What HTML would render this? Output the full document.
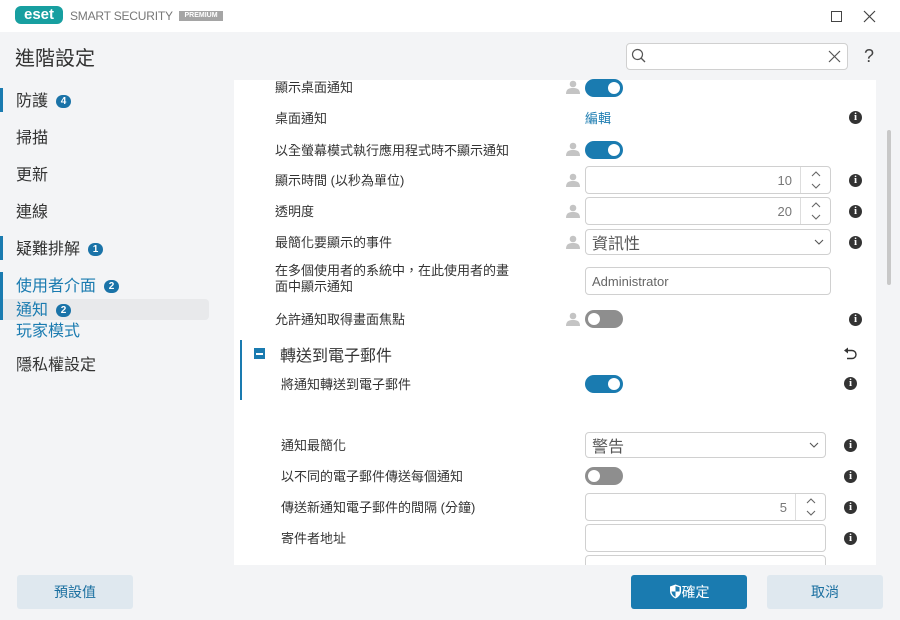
<!DOCTYPE html>
<html><head><meta charset="utf-8"><style>
*{margin:0;padding:0;box-sizing:border-box}
body{width:900px;height:620px;overflow:hidden;background:#f3f4f6;font-family:"Liberation Sans","Noto Sans CJK TC",sans-serif;color:#333;position:relative}
.a{position:absolute}
.top{left:0;top:0;width:900px;height:32px;background:#fff}
.side{font-size:16px;color:#333;left:16px}
.bar{left:0;width:3px;background:#1a7bb0}
.badge{display:inline-block;background:#1a73a8;color:#fff;font-size:10px;font-weight:bold;border-radius:7px;width:15px;height:13px;line-height:13px;text-align:center;vertical-align:2px;margin-left:8px}
.lbl{font-size:13px;color:#333}
.tog{width:38px;height:18px;border-radius:9px;background:#1a7bb0}
.tog::after{content:"";position:absolute;right:3px;top:3px;width:12px;height:12px;border-radius:50%;background:#fff}
.tog.off{background:#8e8e8e}
.tog.off::after{left:3px;right:auto}
.inp{background:#fff;border:1px solid #d0d0d0;border-radius:4px;font-size:13px;color:#666}
.info{width:13px;height:13px;border-radius:50%;background:#333;color:#fff;font-size:11px;font-weight:bold;text-align:center;line-height:13px;font-family:"Liberation Serif",serif}
.usr{width:14px;height:14px}
.btn{height:34px;border-radius:3px;font-size:14px;text-align:center;line-height:34px}
</style></head><body>
<div class="a top"></div>
<div class="a" style="left:15px;top:6px;width:48px;height:18px;border-radius:6px;background:#179fa0;color:#fff;font-weight:bold;font-size:15px;line-height:18px;text-align:center">eset</div>
<div class="a" style="left:70px;top:9px;font-size:12px;color:#777;letter-spacing:-0.2px">SMART SECURITY</div>
<div class="a" style="left:179px;top:11px;width:44px;height:10px;background:#a5a5a5;color:#fff;font-size:7px;font-weight:bold;line-height:10px;text-align:center">PREMIUM</div>
<div class="a" style="left:831px;top:11px;width:11px;height:11px;border:1px solid #444"></div>
<svg class="a" style="left:863px;top:10px" width="13" height="13"><path d="M1 1L12 12M12 1L1 12" stroke="#444" stroke-width="1.2"/></svg>

<div class="a" style="left:15px;top:42px;font-size:20px;color:#333">進階設定</div>
<div class="a inp" style="left:626px;top:43px;width:222px;height:27px"></div>
<svg class="a" style="left:631px;top:48px" width="16" height="16"><circle cx="6.5" cy="6.5" r="5" fill="none" stroke="#555" stroke-width="1.2"/><path d="M10 10L14 14" stroke="#555" stroke-width="1.3"/></svg>
<svg class="a" style="left:828px;top:50px" width="13" height="13"><path d="M1 1L12 12M12 1L1 12" stroke="#555" stroke-width="1.2"/></svg>
<div class="a" style="left:864px;top:46px;font-size:18px;color:#444">?</div>

<div class="a bar" style="top:88px;height:24px"></div>
<div class="a side" style="top:87px">防護<span class="badge">4</span></div>
<div class="a side" style="top:124px">掃描</div>
<div class="a side" style="top:161px">更新</div>
<div class="a side" style="top:198px">連線</div>
<div class="a bar" style="top:236px;height:24px"></div>
<div class="a side" style="top:235px">疑難排解<span class="badge">1</span></div>
<div class="a bar" style="top:272px;height:48px"></div>
<div class="a" style="left:3px;top:299px;width:206px;height:21px;background:#e8e9eb;border-radius:0 4px 4px 0"></div>
<div class="a side" style="top:272px;color:#1a7bb0">使用者介面<span class="badge">2</span></div>
<div class="a side" style="top:296px;color:#1a7bb0">通知<span class="badge">2</span></div>
<div class="a side" style="top:317px;color:#1a7bb0">玩家模式</div>
<div class="a side" style="top:351px">隱私權設定</div>

<div class="a" style="left:234px;top:80px;width:642px;height:485px;background:#fff"></div>
<div class="a" style="left:887px;top:130px;width:4px;height:155px;background:#c8c8c8;border-radius:2px"></div>

<svg width="0" height="0" style="position:absolute"><defs><symbol id="u" viewBox="0 0 14 14"><circle cx="7" cy="4" r="3.3" fill="#c4c4c4"/><path d="M0 14C0 9 3 8 7 8S14 9 14 14Z" fill="#c4c4c4"/></symbol><symbol id="sp" viewBox="0 0 12 22"><path d="M2 7L6 3L10 7M2 15L6 19L10 15" fill="none" stroke="#666" stroke-width="1.1"/></symbol></defs></svg>

<div class="a lbl" style="left:275px;top:77px">顯示桌面通知</div>
<svg class="a usr" style="left:566px;top:80px"><use href="#u"/></svg>
<div class="a tog" style="left:585px;top:79px"></div>

<div class="a lbl" style="left:275px;top:108px">桌面通知</div>
<div class="a lbl" style="left:585px;top:108px;color:#1a7bb0">編輯</div>
<div class="a info" style="left:849px;top:111px">i</div>

<div class="a lbl" style="left:275px;top:140px">以全螢幕模式執行應用程式時不顯示通知</div>
<svg class="a usr" style="left:566px;top:142px"><use href="#u"/></svg>
<div class="a tog" style="left:585px;top:141px"></div>

<div class="a lbl" style="left:275px;top:170px">顯示時間 (以秒為單位)</div>
<svg class="a usr" style="left:566px;top:173px"><use href="#u"/></svg>
<div class="a inp" style="left:585px;top:166px;width:246px;height:28px"><div class="a" style="right:38px;top:6px;color:#777">10</div><div class="a" style="left:214px;top:0;width:1px;height:26px;background:#ddd"></div><svg class="a" style="left:224px;top:2px" width="12" height="22"><use href="#sp"/></svg></div>
<div class="a info" style="left:849px;top:174px">i</div>

<div class="a lbl" style="left:275px;top:201px">透明度</div>
<svg class="a usr" style="left:566px;top:204px"><use href="#u"/></svg>
<div class="a inp" style="left:585px;top:197px;width:246px;height:28px"><div class="a" style="right:38px;top:6px;color:#777">20</div><div class="a" style="left:214px;top:0;width:1px;height:26px;background:#ddd"></div><svg class="a" style="left:224px;top:2px" width="12" height="22"><use href="#sp"/></svg></div>
<div class="a info" style="left:849px;top:205px">i</div>

<div class="a lbl" style="left:275px;top:232px">最簡化要顯示的事件</div>
<svg class="a usr" style="left:566px;top:235px"><use href="#u"/></svg>
<div class="a inp" style="left:585px;top:229px;width:246px;height:26px"><div class="a" style="left:6px;top:0px;font-size:16px;color:#555">資訊性</div><svg class="a" style="left:228px;top:9px" width="10" height="7"><path d="M1 1L5 5L9 1" fill="none" stroke="#555" stroke-width="1.1"/></svg></div>
<div class="a info" style="left:849px;top:236px">i</div>

<div class="a lbl" style="left:275px;top:263px;line-height:16px">在多個使用者的系統中，在此使用者的畫<br>面中顯示通知</div>
<div class="a inp" style="left:585px;top:267px;width:246px;height:28px"><div class="a" style="left:6px;top:6px">Administrator</div></div>

<div class="a lbl" style="left:275px;top:309px">允許通知取得畫面焦點</div>
<svg class="a usr" style="left:566px;top:312px"><use href="#u"/></svg>
<div class="a tog off" style="left:585px;top:310px"></div>
<div class="a info" style="left:849px;top:313px">i</div>

<div class="a" style="left:240px;top:340px;width:2px;height:60px;background:#1a7bb0"></div>
<div class="a" style="left:254px;top:348px;width:11px;height:11px;background:#1a7bb0"><div class="a" style="left:2px;top:5px;width:7px;height:1.5px;background:#fff"></div></div>
<div class="a" style="left:280px;top:342px;font-size:16px;color:#333">轉送到電子郵件</div>
<svg class="a" style="left:843px;top:347px" width="14" height="14"><path d="M4 3.5H9a4 4 0 0 1 0 8H4" fill="none" stroke="#333" stroke-width="1.4"/><path d="M1 3.5L5 0.5V6.5Z" fill="#333"/></svg>

<div class="a lbl" style="left:281px;top:374px">將通知轉送到電子郵件</div>
<div class="a tog" style="left:585px;top:375px"></div>
<div class="a info" style="left:844px;top:377px">i</div>

<div class="a lbl" style="left:281px;top:435px">通知最簡化</div>
<div class="a inp" style="left:585px;top:432px;width:241px;height:26px"><div class="a" style="left:6px;top:0px;font-size:16px;color:#555">警告</div><svg class="a" style="left:223px;top:9px" width="10" height="7"><path d="M1 1L5 5L9 1" fill="none" stroke="#555" stroke-width="1.1"/></svg></div>
<div class="a info" style="left:844px;top:439px">i</div>

<div class="a lbl" style="left:281px;top:466px">以不同的電子郵件傳送每個通知</div>
<div class="a tog off" style="left:585px;top:467px"></div>
<div class="a info" style="left:844px;top:470px">i</div>

<div class="a lbl" style="left:281px;top:497px">傳送新通知電子郵件的間隔 (分鐘)</div>
<div class="a inp" style="left:585px;top:493px;width:241px;height:28px"><div class="a" style="right:38px;top:6px;color:#777">5</div><div class="a" style="left:209px;top:0;width:1px;height:26px;background:#ddd"></div><svg class="a" style="left:219px;top:2px" width="12" height="22"><use href="#sp"/></svg></div>
<div class="a info" style="left:844px;top:501px">i</div>

<div class="a lbl" style="left:281px;top:528px">寄件者地址</div>
<div class="a inp" style="left:585px;top:524px;width:241px;height:28px"></div>
<div class="a info" style="left:844px;top:532px">i</div>
<div class="a inp" style="left:585px;top:555px;width:241px;height:20px"></div>

<div class="a" style="left:0;top:565px;width:900px;height:55px;background:#f3f4f6"></div>
<div class="a btn" style="left:17px;top:575px;width:116px;background:#dfe8ef;color:#1a6fa0">預設值</div>
<div class="a btn" style="left:631px;top:575px;width:116px;background:#1a7bb0;color:#fff"><svg width="13" height="15" style="vertical-align:-2px" viewBox="0 0 13 15"><path d="M6.5 0.5L12 2.5V7C12 10.5 9.5 13 6.5 14.5C3.5 13 1 10.5 1 7V2.5Z" fill="#fff"/><path d="M6.5 2V7.5H2.5C2.8 10 4.5 12 6.5 13V7.5H10.5V3.3Z" fill="#1a7bb0"/></svg>確定</div>
<div class="a btn" style="left:767px;top:575px;width:116px;background:#dfe8ef;color:#1a6fa0">取消</div>
</body></html>
